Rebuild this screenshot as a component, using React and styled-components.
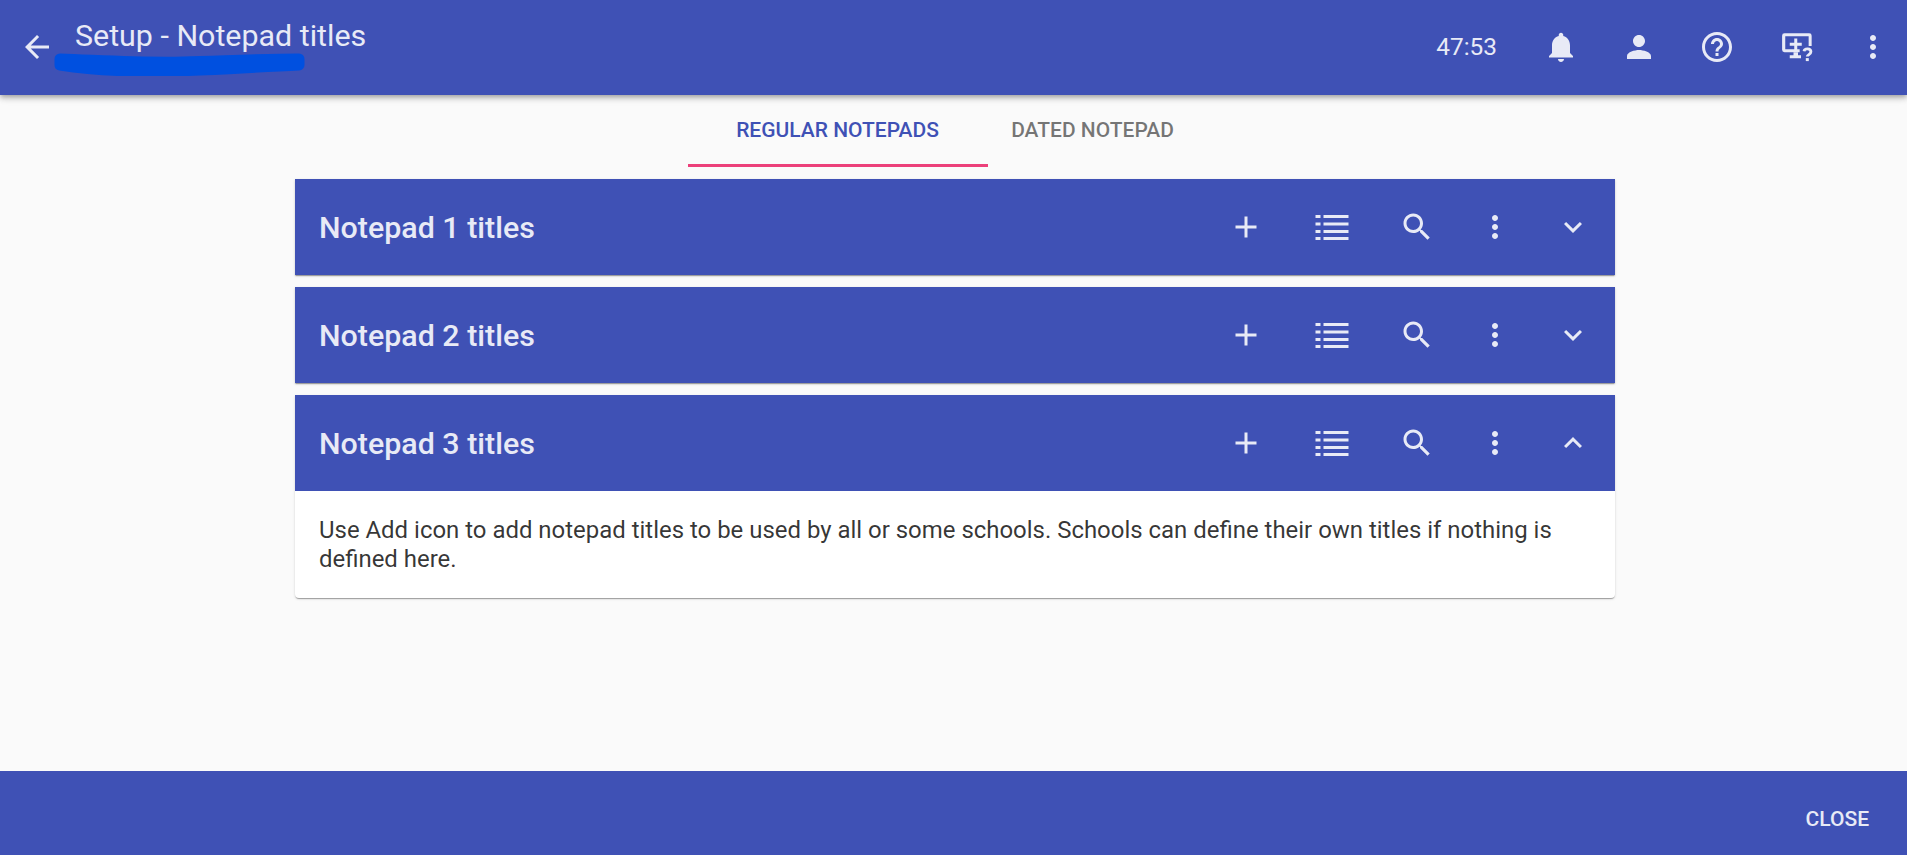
import React from "react";
import styled, { createGlobalStyle } from "styled-components";

const GlobalStyle = createGlobalStyle`
  html, body {
    margin: 0;
    padding: 0;
    height: 100%;
    background: #fafafa;
    font-family: Roboto, "Liberation Sans", sans-serif;
  }
`;

const Page = styled.div`
  width: 1907px;
  height: 855px;
  display: flex;
  flex-direction: column;
  overflow: hidden;
  background: #fafafa;
`;

const TopBar = styled.header`
  position: relative;
  z-index: 2;
  flex: none;
  height: 95px;
  box-sizing: border-box;
  display: flex;
  align-items: center;
  padding: 0 0 2px 19px;
  background: #3f51b5;
  color: #e8eaf6;
  box-shadow: 0 2px 4px -1px rgba(0,0,0,.2), 0 4px 5px 0 rgba(0,0,0,.14), 0 1px 10px 0 rgba(0,0,0,.12);
`;

const BackIcon = styled.svg`
  width: 36px;
  height: 36px;
  fill: currentColor;
  flex: none;
`;

const TitleWrap = styled.div`
  position: relative;
  margin-left: 20px;
  margin-top: -21px;
`;

const Title = styled.h1`
  margin: 0;
  font-size: 30.4px;
  font-weight: 400;
  line-height: 38px;
  color: #e8eaf6;
`;

const Scribble = styled.svg`
  position: absolute;
  left: -22px;
  top: 33px;
  width: 256px;
  height: 26px;
`;

const Spacer = styled.div`
  flex: 1;
`;

const Timer = styled.span`
  font-size: 24.4px;
  margin-right: 30px;
`;

const TopIcons = styled.div`
  display: flex;
  gap: 10px;
`;

const IconSlot = styled.div`
  width: ${p => p.$w || 68}px;
  display: flex;
  justify-content: center;
  align-items: center;
  color: #e8eaf6;
`;

const Icon = styled.svg`
  width: 36px;
  height: 36px;
  fill: currentColor;
  display: block;
`;

const Tabs = styled.nav`
  flex: none;
  height: 84px;
  display: flex;
  justify-content: center;
`;

const TabRow = styled.div`
  display: flex;
  height: 72px;
  margin-right: 22px;
`;

const Tab = styled.div`
  width: ${p => p.$w}px;
  height: 72px;
  box-sizing: border-box;
  display: flex;
  align-items: center;
  justify-content: center;
  font-size: 21px;
  font-weight: 500;
  color: ${p => (p.$active ? "#3f51b5" : "rgba(0,0,0,.54)")};
  border-bottom: 3px solid ${p => (p.$active ? "#ec407a" : "transparent")};
`;

const Content = styled.main`
  flex: 1;
  width: 1320px;
  margin-left: 295px;
  display: flex;
  flex-direction: column;
  gap: 12px;
`;

const Panel = styled.section`
  border-radius: 0 0 ${p => (p.$open ? "4px 4px" : "0 0")};
  background: #fff;
  overflow: hidden;
  box-shadow: 0 2px 1px -1px rgba(0,0,0,.2), 0 1px 1px 0 rgba(0,0,0,.14), 0 1px 3px 0 rgba(0,0,0,.12);
`;

const PanelHead = styled.div`
  height: 96px;
  display: flex;
  align-items: center;
  padding: 0 0 0 24px;
  background: #3f51b5;
  color: #e8eaf6;
`;

const PanelTitle = styled.h2`
  flex: 1;
  margin: 0;
  font-size: 30.4px;
  font-weight: 500;
`;

const PanelIcons = styled.div`
  display: flex;
  align-items: center;
  margin-right: 3px;
`;

const PanelBody = styled.p`
  margin: 0;
  padding: 25px 24px 24px;
  font-size: 23.95px;
  line-height: 29px;
  color: rgba(0,0,0,.8);
`;

const Footer = styled.footer`
  flex: none;
  height: 84px;
  display: flex;
  align-items: center;
  justify-content: flex-end;
  padding: 0 38px 0 0;
  background: #3f51b5;
`;

const CloseButton = styled.button`
  border: 0;
  background: none;
  padding: 0;
  font: 500 21px Roboto, sans-serif;
  color: #e8eaf6;
  position: relative;
  top: 6px;
`;

const paths = {
  back: "M20 11H7.83l5.59-5.59L12 4l-8 8 8 8 1.41-1.41L7.83 13H20v-2z",
  bell: "M12 22c1.1 0 2-.9 2-2h-4c0 1.1.89 2 2 2zm6-6v-5c0-3.07-1.64-5.64-4.5-6.32V4c0-.83-.67-1.5-1.5-1.5s-1.5.67-1.5 1.5v.68C7.63 5.36 6 7.92 6 11v5l-2 2v1h16v-1l-2-2z",
  person: "M12 12c2.21 0 4-1.79 4-4s-1.79-4-4-4-4 1.79-4 4 1.79 4 4 4zm0 2c-2.67 0-8 1.34-8 4v2h16v-2c0-2.66-5.33-4-8-4z",
  help: "M11 18h2v-2h-2v2zm1-16C6.48 2 2 6.48 2 12s4.48 10 10 10 10-4.48 10-10S17.52 2 12 2zm0 18c-4.41 0-8-3.59-8-8s3.59-8 8-8 8 3.59 8 8-3.59 8-8 8zm0-14c-2.21 0-4 1.79-4 4h2c0-1.1.9-2 2-2s2 .9 2 2c0 2-3 1.75-3 5h2c0-2.25 3-2.5 3-5 0-2.21-1.79-4-4-4z",
  more: "M12 8c1.1 0 2-.9 2-2s-.9-2-2-2-2 .9-2 2 .9 2 2 2zm0 2c-1.1 0-2 .9-2 2s.9 2 2 2 2-.9 2-2-.9-2-2-2zm0 6c-1.1 0-2 .9-2 2s.9 2 2 2 2-.9 2-2-.9-2-2-2z",
  add: "M19 13h-6v6h-2v-6H5v-2h6V5h2v6h6v2z",
  search: "M15.5 14h-.79l-.28-.27C15.41 12.59 16 11.11 16 9.5 16 5.91 13.09 3 9.5 3S3 5.91 3 9.5 5.91 16 9.5 16c1.61 0 3.09-.59 4.23-1.57l.27.28v.79l5 4.99L20.49 19l-4.99-5zm-6 0C7.01 14 5 11.99 5 9.5S7.01 5 9.5 5 14 7.01 14 9.5 11.99 14 9.5 14z",
  down: "M16.59 8.59L12 13.17 7.41 8.59 6 10l6 6 6-6z",
  up: "M12 8l-6 6 1.41 1.41L12 10.83l4.59 4.58L18 14z",
  list: "M1 4h3.33v2H1zM1 9h3.33v2H1zM1 14h3.33v2H1zM1 18.67h3.33v2H1zM6.33 4H23v2H6.33zM6.33 9H23v2H6.33zM6.33 14H23v2H6.33zM6.33 18.67H23v2H6.33z",
};

const Glyph = ({ name }) => (
  <Icon viewBox="0 0 24 24"><path d={paths[name]} /></Icon>
);

// monitor with a plus and a small question mark, not in the icon set
const DesktopHelp = () => (
  <Icon viewBox="0 0 24 24">
    <path d="M5 2.9h16.5a1.6 1.6 0 0 1 1.6 1.6v6.8h-2V4.9H5.5v8.6h9.6v2H5a1.6 1.6 0 0 1-1.6-1.6V4.5A1.6 1.6 0 0 1 5 2.9z" />
    <path d="M11.5 6.3h2v2.9h3v2h-3v2.9h-2v-2.9h-3v-2h3z" />
    <path d="M11 15.5h3v2h2v2H8.5v-2H11z" />
    <path d="M18 14.8c.3-2 4.6-2.2 4.6.4 0 1.9-2.4 1.8-2.4 3.2" fill="none" stroke="currentColor" strokeWidth="1.9" />
    <path d="M19.2 19.4h2v2h-2z" />
  </Icon>
);

const panelIconSlots = [
  ["add", 81],
  ["list", 91],
  ["search", 79],
  ["more", 78],
];

const NotepadPanel = ({ title, open, children }) => (
  <Panel $open={open}>
    <PanelHead>
      <PanelTitle>{title}</PanelTitle>
      <PanelIcons>
        {panelIconSlots.map(([name, w]) => (
          <IconSlot key={name} $w={w}><Glyph name={name} /></IconSlot>
        ))}
        <IconSlot $w={78}><Glyph name={open ? "up" : "down"} /></IconSlot>
      </PanelIcons>
    </PanelHead>
    {children && <PanelBody>{children}</PanelBody>}
  </Panel>
);

export default function App() {
  return (
    <Page>
      <GlobalStyle />
      <TopBar>
        <BackIcon viewBox="0 0 24 24"><path d={paths.back} /></BackIcon>
        <TitleWrap>
          <Title>Setup - Notepad titles</Title>
          <Scribble viewBox="0 0 256 26">
            <path d="M7 9 C60 11 90 13 130 12 C170 11 210 9 246 9 L246 15 C200 17 160 20 120 21 C80 22 40 20 7 15 Z" fill="#0050e0" stroke="#0050e0" strokeWidth="11" strokeLinejoin="round" />
          </Scribble>
        </TitleWrap>
        <Spacer />
        <Timer>47:53</Timer>
        <TopIcons>
          <IconSlot><Glyph name="bell" /></IconSlot>
          <IconSlot><Glyph name="person" /></IconSlot>
          <IconSlot><Glyph name="help" /></IconSlot>
          <IconSlot><DesktopHelp /></IconSlot>
          <IconSlot><Glyph name="more" /></IconSlot>
        </TopIcons>
      </TopBar>
      <Tabs>
        <TabRow>
          <Tab $active $w={300}>REGULAR NOTEPADS</Tab>
          <Tab $w={210}>DATED NOTEPAD</Tab>
        </TabRow>
      </Tabs>
      <Content>
        <NotepadPanel title="Notepad 1 titles" />
        <NotepadPanel title="Notepad 2 titles" />
        <NotepadPanel title="Notepad 3 titles" open>
          Use Add icon to add notepad titles to be used by all or some schools. Schools can define their own titles if nothing is defined here.
        </NotepadPanel>
      </Content>
      <Footer>
        <CloseButton>CLOSE</CloseButton>
      </Footer>
    </Page>
  );
}
